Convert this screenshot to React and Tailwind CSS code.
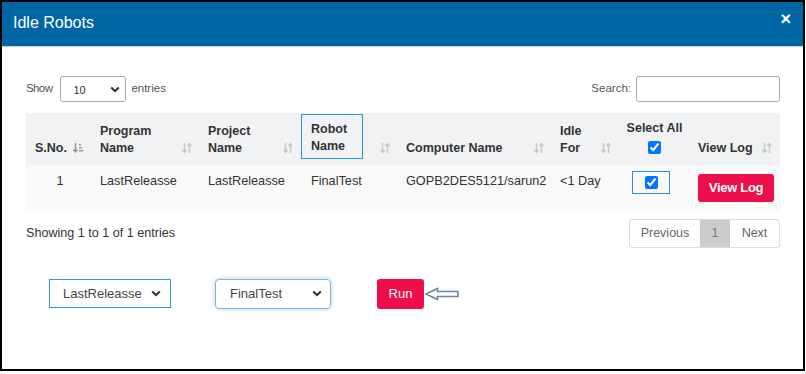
import { useState } from 'react';

function SortIcon({ active }) {
  const c = active ? '#9a9a9a' : '#c9c9c9';
  if (active) {
    return (
      <svg width="11" height="12" viewBox="0 0 11 12" className="shrink-0">
        <path d="M2.5 1v9M0.5 7.5l2 2.5 2-2.5" stroke={c} strokeWidth="1.6" fill="none" />
        <rect x="6" y="2" width="2" height="1.5" fill={c} />
        <rect x="6" y="5" width="3" height="1.5" fill={c} />
        <rect x="6" y="8" width="4.5" height="1.5" fill={c} />
      </svg>
    );
  }
  return (
    <svg width="10" height="12" viewBox="0 0 10 12" className="shrink-0">
      <path d="M2.5 1v9.5M0.5 8l2 2.5 2-2.5" stroke={c} strokeWidth="1.5" fill="none" />
      <path d="M7.5 11V1.5M5.5 4l2-2.5 2 2.5" stroke={c} strokeWidth="1.5" fill="none" />
    </svg>
  );
}

function Chevron() {
  return (
    <svg width="10" height="7" viewBox="0 0 10 7" className="shrink-0">
      <path d="M1.2 1.5l3.8 3.6 3.8-3.6" stroke="#333" strokeWidth="2" fill="none" />
    </svg>
  );
}

function Th({ children, className = '', sort = true, active = false }) {
  return (
    <th className={`align-bottom text-left font-bold text-[#333] px-2 pb-[8px] ${className}`}>
      <div className="flex items-end justify-between gap-1">
        <div className="leading-[17px]">{children}</div>
        {sort && <div className="pb-[3px]"><SortIcon active={active} /></div>}
      </div>
    </th>
  );
}

export default function App() {
  const [checked, setChecked] = useState(true);
  const [all, setAll] = useState(true);

  return (
    <div className="w-[806px] h-[374px] bg-white" style={{ fontFamily: '"Liberation Sans", Arial, sans-serif' }}>
      <div className="w-[805px] h-[371px] border-2 border-black flex flex-col">
        <div className="h-[45px] bg-[#0166a4] border-b border-[#c8d3dc] flex items-center justify-between pl-[11px] pr-[12px] shrink-0">
          <h2 className="text-white text-[16px] pb-[2px]">Idle Robots</h2>
          <button className="text-white font-bold text-[18px] leading-none pb-[10px]">×</button>
        </div>

        <div className="pl-[24px] pr-[23px] pt-[29px]">
          <div className="flex items-center justify-between h-[26px]">
            <div className="flex items-center text-[11.5px] text-[#555]">
              <span className="tracking-[-0.6px]">Show</span>
              <div className="ml-[8px] mr-[5px] w-[66px] h-[26px] border border-[#aaa] rounded-[3px] flex items-center justify-between pl-[12px] pr-[5px] text-[#333] text-[11px]">
                <span className="pt-[2px]">10</span>
                <Chevron />
              </div>
              <span>entries</span>
            </div>
            <div className="flex items-center text-[11.5px] text-[#555]">
              <span className="mr-[5px]">Search:</span>
              <input className="w-[144px] h-[26px] border border-[#aaa] rounded-[3px] outline-none" />
            </div>
          </div>

          <table className="w-[754px] mt-[11px] border-collapse table-fixed text-[12.5px]">
            <colgroup>
              <col className="w-[66px]" />
              <col className="w-[108px]" />
              <col className="w-[101px]" />
              <col className="w-[97px]" />
              <col className="w-[154px]" />
              <col className="w-[67px]" />
              <col className="w-[71px]" />
              <col className="w-[90px]" />
            </colgroup>
            <thead>
              <tr className="h-[52px] bg-[#f1f2f3]">
                <Th active className="pl-[9px]">S.No.</Th>
                <Th>Program<br />Name</Th>
                <Th>Project<br />Name</Th>
                <th className="align-top text-left font-bold text-[#333] pl-0 pr-2 pt-[1px]">
                  <div className="flex items-end justify-between h-[45px]">
                    <div className="leading-[17px] border border-[#2c9ad6] w-[62px] h-[45px] pl-[9px] pt-[6px]">Robot<br />Name</div>
                    <div className="pb-[5px]"><SortIcon /></div>
                  </div>
                </th>
                <Th>Computer Name</Th>
                <Th>Idle<br />For</Th>
                <th className="align-top text-center font-bold text-[#333] pt-[8px] px-0">
                  <div className="leading-[15px]">Select All</div>
                  <input type="checkbox" checked={all} onChange={() => setAll(!all)} className="w-[13px] h-[13px] mt-[5px] accent-[#0075ff]" />
                </th>
                <Th className="pl-[8px]">View Log</Th>
              </tr>
            </thead>
            <tbody>
              <tr className="bg-[#f9f9f9] h-[46px] text-[12.7px] text-[#333] align-top">
                <td className="text-center pt-[7px] pl-[2px]">1</td>
                <td className="pt-[7px] px-2">LastReleasse</td>
                <td className="pt-[7px] px-2">LastReleasse</td>
                <td className="pt-[7px] px-2 pl-[10px]">FinalTest</td>
                <td className="pt-[7px] px-2">GOPB2DES5121/sarun2</td>
                <td className="pt-[7px] px-2">&lt;1 Day</td>
                <td className="pt-[6px] pl-[13px]">
                  <div className="w-[38px] h-[23px] border border-[#2a8fcf] flex items-center justify-center">
                    <input type="checkbox" checked={checked} onChange={() => setChecked(!checked)} className="w-[13px] h-[13px] accent-[#0075ff]" />
                  </div>
                </td>
                <td className="pt-[9px] pl-[8px]">
                  <button className="w-[76px] h-[28px] bg-[#ec0f4b] text-white font-bold text-[13px] rounded-[3px] tracking-[-0.3px]">View Log</button>
                </td>
              </tr>
            </tbody>
          </table>

          <div className="flex items-start justify-between mt-[8px]">
            <span className="text-[12.6px] text-[#333] pt-[5px]">Showing 1 to 1 of 1 entries</span>
            <div className="flex h-[29px] border border-[#ddd] rounded-[3px] text-[12.5px] text-[#666] overflow-hidden">
              <span className="w-[70px] flex items-center justify-center">Previous</span>
              <span className="w-[30px] flex items-center justify-center bg-[#cccccc] text-[#777]">1</span>
              <span className="w-[49px] flex items-center justify-center">Next</span>
            </div>
          </div>

          <div className="flex items-center mt-[30px] pl-[23px] h-[31px]">
            <div className="w-[122px] h-[29px] border border-[#2b9ad6] flex items-center justify-between pl-[13px] pr-[9px] text-[13px] text-[#444]">
              <span>LastReleasse</span>
              <Chevron />
            </div>
            <div className="ml-[44px] w-[116px] h-[30px] border border-[#7fb6dc] rounded-[4px] shadow-[0_0_4px_rgba(70,150,220,0.45)] flex items-center justify-between pl-[14px] pr-[8px] text-[13px] text-[#444]">
              <span>FinalTest</span>
              <Chevron />
            </div>
            <button className="ml-[46px] w-[47px] h-[30px] bg-[#ee0f4a] text-white text-[13px] rounded-[3px]">Run</button>
            <svg width="35" height="14" viewBox="0 0 35 14" className="ml-[1px]">
              <path d="M1 7L12.5 1.5V4.5H33V9.5H12.5V12.5Z" fill="#fff" stroke="#6585ad" strokeWidth="1.6" strokeLinejoin="miter" />
            </svg>
          </div>
        </div>
      </div>
    </div>
  );
}
